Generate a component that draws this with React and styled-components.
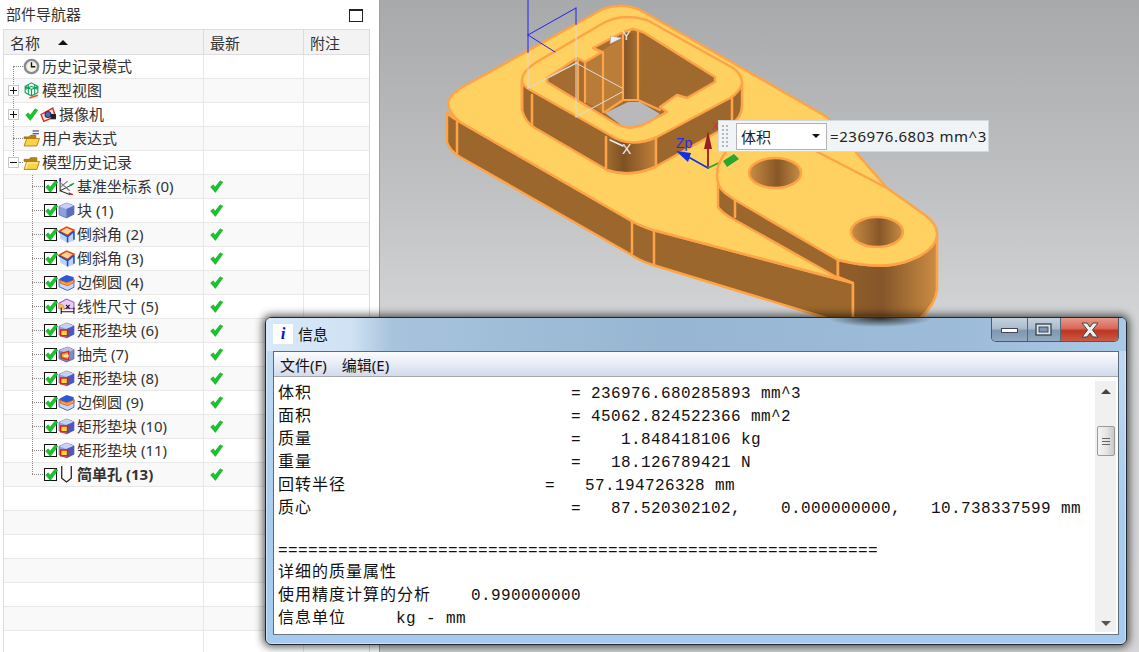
import React from 'react';
import styled, { createGlobalStyle } from 'styled-components';

const CJK = '"Noto Sans", "Noto Sans CJK SC", sans-serif';
const MONO_CJK = '"Liberation Mono", "Noto Sans CJK SC", monospace';

const Global = createGlobalStyle`
  html, body { margin: 0; padding: 0; width: 1139px; height: 652px; overflow: hidden; background: #fff; }
  * { box-sizing: border-box; }
`;

const Page = styled.div`
  position: relative; display: flex; width: 1139px; height: 652px; overflow: hidden;
  font-family: ${CJK}; color: #222;
`;
const Navigator = styled.aside`
  width: 380px; height: 652px; flex: none; display: flex; flex-direction: column;
  background: #fff; border-right: 1px solid #a0a0a0; padding-left: 3px; padding-right: 9px;
`;
const PanelHead = styled.header`
  height: 29px; flex: none; display: flex; align-items: center; justify-content: space-between;
  padding: 0 7px 3px 3px; font-size: 15px; color: #333;
`;
const MaxBox = styled.span`
  width: 14px; height: 13px; border: 1.5px solid #222; border-top-width: 2px; display: block; margin-top: 4px;
`;
const Table = styled.div`
  flex: 1; display: flex; flex-direction: column; overflow: hidden;
  border: solid #dcdcdc; border-width: 1px 1px 0 1px; min-height: 0;
`;
const HeadRow = styled.div`
  height: 25px; flex: none; display: grid; grid-template-columns: 200px 100px 1fr;
  background: #f3f3f3; border-bottom: 1px solid #dedede;
`;
const HeadCell = styled.div`
  display: flex; align-items: center; gap: 18px; padding-left: 6px; font-size: 15px; color: #333;
  border-right: 1px solid #dcdcdc; &:last-child { border-right: 0; }
`;
const SortUp = styled.span`
  width: 0; height: 0; border: 5px solid transparent; border-top: 0; border-bottom: 5px solid #111; margin-top: 1px;
`;
const Row = styled.div`
  position: relative; height: 24px; flex: none; display: grid; grid-template-columns: 200px 100px 1fr;
  background: ${p => (p.$alt ? '#f9f9f9' : '#fff')}; border-bottom: 1px solid #e8e8e8;
`;
const Cell = styled.div`
  display: flex; align-items: center; border-right: 1px solid #e8e8e8; &:last-child { border-right: 0; }
`;
const NameCell = styled(Cell)`
  position: relative; padding-left: ${p => (p.$level ? 40 : 4)}px; font-size: 15px; color: #333; white-space: nowrap;
  font-weight: ${p => (p.$bold ? 700 : 400)};
`;
const StatusCell = styled(Cell)`padding-left: 6px;`;
const VGuide = styled.i`
  position: absolute; left: ${p => p.$x}px; top: ${p => p.$from}px; bottom: ${p => p.$to}px; width: 0;
  border-left: 1px dotted #8a8a8a;
`;
const HGuide = styled.i`
  position: absolute; left: ${p => p.$x}px; top: 11px; width: ${p => p.$w}px; height: 0;
  border-top: 1px dotted #8a8a8a;
`;
const Expander = styled.span`
  position: relative; z-index: 1; width: 11px; height: 11px; flex: none; border: 1px solid #c8c8c8; background: #fff;
  &::before { content: ''; position: absolute; left: 1px; right: 1px; top: 4px; height: 1px; background: #111; }
  &::after { content: ${p => (p.$open ? 'none' : "''")}; position: absolute; top: 1px; bottom: 1px; left: 4px; width: 1px; background: #111; }
`;
const Slot = styled.span`width: 11px; flex: none;`;
const Spacer = styled.span`width: ${p => p.$w}px; flex: none;`;
const CheckBox = styled.span`
  position: relative; width: 13px; height: 13px; flex: none; border: 1.5px solid #111; background: #fff; margin-right: 1px;
  & > svg { position: absolute; left: 0; top: -1px; }
`;
const IconSlot = styled.span`
  position: relative; z-index: 1; width: 16px; flex: none; display: flex; justify-content: center; margin-top: -1px;
`;
const Label = styled.span`margin: -2px 0 0 3px;`;

const Viewport = styled.main`
  flex: 1; height: 652px; background: linear-gradient(#a8a9ab 0, #c0c1c3 190px, #d3d4d6 320px, #d6d6d8 100%);
`;
const Scene = styled.svg`display: block; width: 759px; height: 652px;`;

const Measure = styled.div`
  position: absolute; left: 718px; top: 120px; width: 271px; height: 32px; display: flex; align-items: center;
  background: #f0f4f6; border: 1px solid #d4d8da; font-size: 15px; color: #222;
`;
const Gripper = styled.span`
  width: 8px; height: 24px; margin-left: 2px; flex: none; opacity: .8;
  background-image: radial-gradient(#a9a9a9 1px, transparent 1.2px); background-size: 4px 4px;
`;
const MeasureSelect = styled.div`
  width: 91px; height: 27px; margin-left: 7px; flex: none; display: flex; align-items: center; justify-content: space-between;
  padding: 0 6px 0 4px; background: #fff; border: 1px solid #b4b4b4;
`;
const Caret = styled.span`
  width: 0; height: 0; border: 4px solid transparent; border-bottom: 0; border-top: 4px solid #111;
`;
const MeasureValue = styled.span`margin-left: 3px; white-space: nowrap; letter-spacing: .55px;`;

const Win = styled.section`
  position: absolute; left: 265px; top: 317px; width: 862px; height: 328px; display: flex; flex-direction: column;
  padding: 0 7px 9px 7px; border: 1px solid #23272b; border-radius: 6px;
  background: linear-gradient(#c5dcf2, #a9ccee 60%, #a6cbee);
  box-shadow: 0 0 9px 2px rgba(0,0,0,.65), inset 0 0 0 1px rgba(255,255,255,.45);
`;
const TitleBar = styled.div`
  height: 33px; flex: none; display: flex; align-items: flex-start; margin: 0 -7px; padding: 0 7px;
  border-radius: 5px 5px 0 0;
  background:
    radial-gradient(ellipse 52px 9px at 614px 0, rgba(30,22,14,.85), rgba(30,22,14,0)),
    linear-gradient(90deg, #d8e9f9 0, #cfe2f4 85px, #a8c3dc 125px, #96b6d3 400px, #9dbcd9 700px, #a9c9e6 100%);
`;
const TitleIcon = styled.span`
  width: 20px; height: 20px; flex: none; margin-top: 6px; background: #fff; display: flex; align-items: center; justify-content: center;
  font: italic 700 17px "Liberation Serif", serif; color: #1414c8;
`;
const TitleText = styled.span`margin: 6px 0 0 5px; font-size: 15px; line-height: 20px; color: #111;`;
const Controls = styled.div`
  margin-left: auto; margin-right: 0; display: flex; height: 24px;
  border: 1px solid #4a5868; border-top: 0; border-radius: 0 0 5px 5px; overflow: hidden;
`;
const Ctl = styled.span`
  width: ${p => p.$w}px; height: 100%; display: flex; align-items: center; justify-content: center;
  background: ${p => (p.$close
    ? 'linear-gradient(#e49a8a 0, #d9685a 45%, #bd3520 55%, #cc5a44 100%)'
    : 'linear-gradient(#c4d2df 0, #abbccd 45%, #7f98af 55%, #93aac0 100%)')};
  & + & { border-left: 1px solid #56677a; }
`;
const Client = styled.div`
  flex: 1; min-height: 0; display: flex; flex-direction: column; border: 1px solid #5c6b7a; border-bottom-color: #6b7682; background: #fff;
`;
const MenuBar = styled.nav`
  height: 24px; flex: none; display: flex; align-items: center; gap: 15px; padding-left: 6px; font-size: 15px; color: #111;
  background: linear-gradient(#fbfcfe, #e9edf7 45%, #d3daec);
`;
const MenuRule = styled.div`height: 3px; flex: none; background: #fff; border-top: 1px solid #a9a9a9;`;
const Body = styled.div`flex: 1; min-height: 0; display: flex; padding-right: 2px; background: #fff;`;
const Output = styled.div`flex: 1; min-width: 0; padding: 3px 0 0 4px; overflow: hidden;`;
const Line = styled.div`
  display: flex; height: ${p => p.$h || 23}px; line-height: ${p => p.$h || 23}px; font-size: 16px; color: #111;
  white-space: pre;
`;
const Cjk = styled.span`
  width: ${p => (p.$w ? `${p.$w}px` : 'auto')}; flex: none; margin-top: -2px;
  font-family: "Noto Sans CJK SC", sans-serif; font-size: 16px; letter-spacing: 1px;
`;
const Mono = styled.span`
  margin-top: 1px; font-family: ${MONO_CJK}; letter-spacing: .4px; font-size: 16px;
`;
const Scrollbar = styled.div`
  width: 21px; flex: none; display: flex; flex-direction: column; align-items: center; background: #f0f0f0;
  margin-top: 2px; margin-bottom: 2px; padding: 8px 0 6px;
`;
const ArrowUp = styled.span`
  width: 0; height: 0; border: 5px solid transparent; border-top: 0; border-bottom: 5px solid #444;
`;
const ArrowDown = styled.span`
  width: 0; height: 0; border: 5px solid transparent; border-bottom: 0; border-top: 5px solid #555; margin-top: auto;
`;
const Thumb = styled.div`
  width: 18px; height: 30px; margin-top: 32px; border: 1px solid #9a9a9a; border-radius: 2px;
  background: linear-gradient(90deg, #f4f4f4, #e6e6e6 50%, #c9c9c9); display: flex; flex-direction: column; align-items: center; justify-content: center; gap: 2px;
  & > i { width: 8px; height: 1px; background: #666; display: block; }
`;

const Svg16 = ({ children }) => <svg width={17} height={17} viewBox="0 0 16 16" style={{ flex: 'none', display: 'block' }}>{children}</svg>;

const Tick = ({ s = 13 }) => (
  <svg width={s} height={s} viewBox="0 0 13 13" style={{ display: 'block', flex: 'none' }}>
    <path d="M.6 7 L3.3 4.8 L5 7.3 L10.2 .8 L12.8 2.2 L5.4 12.4 Z" fill="#17c62a" stroke="#0e9c1e" strokeWidth=".5" />
  </svg>
);

const icons = {
  clock: (
    <Svg16><circle cx="8" cy="8" r="7.4" fill="#858c96" /><circle cx="8" cy="8" r="5.1" fill="#f6f1e2" /><path d="M8 4V8.2H11.6" stroke="#111" strokeWidth="1.3" fill="none" /></Svg16>
  ),
  view: (
    <Svg16><path d="M8 .8 14 4V10L8 13 2 10V4Z M2 4 8 7 14 4 M8 7V13 M2 7 8 4 14 7 M5 2.5V11.5 M11 2.5V11.5" fill="#eefaf3" stroke="#12a060" strokeWidth="1" /><path d="M6 15 14 12.5" stroke="#e8502a" strokeWidth="1.6" /></Svg16>
  ),
  camera: (
    <Svg16><path d="M1 8 12 2 14.5 10 3.5 14.5Z" fill="#fbe5dc" stroke="#dd2a12" strokeWidth="1.3" /><circle cx="7.5" cy="8" r="2.8" fill="#5a64a8" stroke="#23308a" /><rect x="10" y="7.5" width="5" height="5" fill="#222" /></Svg16>
  ),
  folder: (
    <Svg16><path d="M1 5H6L7 3.5H13V7H1Z" fill="#b78410" stroke="#8a6208" strokeWidth=".7" /><path d="M1 14.5 3.5 7H15.5L13 14.5Z" fill="#fbd24a" stroke="#a87808" strokeWidth=".8" /><path d="M2.5 14 4.2 8.5H14" stroke="#fff3b8" fill="none" /></Svg16>
  ),
  folderExp: (
    <Svg16><path d="M1 6.5H6L7 5H12V8H1Z" fill="#b78410" stroke="#8a6208" strokeWidth=".7" /><path d="M1 15 3.5 8H15.5L13 15Z" fill="#fbd24a" stroke="#a87808" strokeWidth=".8" /><path d="M9 1H15M9 3.5H15" stroke="#26268c" strokeWidth="1" /></Svg16>
  ),
  csys: (
    <Svg16><path d="M2 2V12L14 6M2 12 12 16" fill="none" stroke="#333" strokeWidth="1" /><path d="M2 9 9 3M3 5 11 12" fill="none" stroke="#777" strokeWidth="1" /><path d="M2 0V3" stroke="#1a1ad0" strokeWidth="1.4" /><path d="M11 7 15 5" stroke="#1aa83a" strokeWidth="1.4" /><path d="M10 14 14 16" stroke="#d8231c" strokeWidth="1.4" /></Svg16>
  ),
  block: (
    <Svg16><path d="M1 4 8 1 15 3.5V11.5L8 15 1 12Z" fill="#8f9fe0" stroke="#6670b4" strokeWidth=".8" /><path d="M1 4 8 6.5 15 3.5 8 1Z" fill="#c9d0f6" /><path d="M8 6.5 15 3.5V11.5L8 15Z" fill="#5c6cc2" /></Svg16>
  ),
  chamfer: (
    <Svg16><path d="M2 6 9 10 15 6V14L9 15.5 2 12Z" fill="#bcd4f8" /><path d="M1 5 8 1 15 4 9 9Z" fill="#fbd68e" stroke="#e2481a" strokeWidth="1.5" /><path d="M1 5.5 9 10V15.5M9 10 15 5M15 5V13" fill="none" stroke="#1e50cc" strokeWidth="1.5" /></Svg16>
  ),
  blend: (
    <Svg16><path d="M1 5V12L9 15.5 15 12.5V5Z" fill="#c9d6f8" stroke="#4a64c4" strokeWidth=".9" /><path d="M2 4 8 1 15 3 14 6 8 8 2 6Z" fill="#2c5ad4" /><path d="M2 6 9 8.5 15 5.5V8L9 11 2 8.5Z" fill="#f6ad4a" stroke="#d8561c" strokeWidth=".8" /></Svg16>
  ),
  dim: (
    <Svg16><path d="M1 5 8 1 15 4V10H1Z" fill="#e6cdf2" stroke="#a05cc0" strokeWidth="1" /><path d="M1 10V5L5 7 6 11" fill="#f7c550" stroke="#d89028" strokeWidth=".7" /><path d="M7.5 6.5 11 10M11 6.5 7.5 10" stroke="#111" strokeWidth="1" /><path d="M3 9V15M15 9V15M3 13H15" stroke="#111" strokeWidth="1" /></Svg16>
  ),
  pad: (
    <Svg16><path d="M1 4 8 1 15 3.5V11.5L8 15 1 12Z" fill="#8f9fe0" stroke="#6670b4" strokeWidth=".8" /><path d="M1 4 8 6.5 15 3.5 8 1Z" fill="#c9d0f6" /><path d="M8 6.5 15 3.5V11.5L8 15Z" fill="#4a5ab8" /><rect x="2.5" y="7.5" width="6.5" height="5.5" fill="#f8d33a" stroke="#dc1f12" strokeWidth="1.4" /></Svg16>
  ),
  shell: (
    <Svg16><path d="M1 4 9 1 15 3.5V12L8 15 1 12Z" fill="#7d8ac4" stroke="#5862a8" strokeWidth=".8" /><path d="M9 1 15 3.5 8 6.5 1 4Z" fill="#b6c0ea" /><path d="M3 7 10 5V13L3 11Z" fill="#f4a23c" stroke="#c8301a" strokeWidth="1.2" /><path d="M5 8.5 10 8V10.5L5 10Z" fill="#fbe3a6" /></Svg16>
  ),
  hole: (
    <Svg16><path d="M3.5 0V11.5L8 15 12.5 11.5V0" fill="#fff" stroke="#222" strokeWidth="1.2" /></Svg16>
  ),
};

const TREE = [
  { label: '历史记录模式', icon: 'clock' },
  { label: '模型视图', icon: 'view', exp: 'plus' },
  { label: '摄像机', icon: 'camera', exp: 'plus', tick: true },
  { label: '用户表达式', icon: 'folderExp' },
  { label: '模型历史记录', icon: 'folder', exp: 'minus' },
  { label: '基准坐标系 (0)', icon: 'csys', feature: true },
  { label: '块 (1)', icon: 'block', feature: true },
  { label: '倒斜角 (2)', icon: 'chamfer', feature: true },
  { label: '倒斜角 (3)', icon: 'chamfer', feature: true },
  { label: '边倒圆 (4)', icon: 'blend', feature: true },
  { label: '线性尺寸 (5)', icon: 'dim', feature: true },
  { label: '矩形垫块 (6)', icon: 'pad', feature: true },
  { label: '抽壳 (7)', icon: 'shell', feature: true },
  { label: '矩形垫块 (8)', icon: 'pad', feature: true },
  { label: '边倒圆 (9)', icon: 'blend', feature: true },
  { label: '矩形垫块 (10)', icon: 'pad', feature: true },
  { label: '矩形垫块 (11)', icon: 'pad', feature: true },
  { label: '简单孔 (13)', icon: 'hole', feature: true, bold: true },
  {}, {}, {}, {}, {}, {}, {}, {},
];

function TreeRow({ item, i }) {
  const isTop = !item.feature && item.label;
  return (
    <Row $alt={i % 2 === 1}>
      <NameCell $level={item.feature ? 1 : 0} $bold={item.bold}>
        {isTop && <VGuide $x={9} $from={i === 0 ? 11 : 0} $to={i === 4 ? 12 : 0} />}
        {isTop && !item.exp && <HGuide $x={9} $w={10} />}
        {item.feature && <VGuide $x={28} $from={0} $to={i === 17 ? 12 : 0} />}
        {item.feature && <HGuide $x={28} $w={11} />}
        {i === 4 && <HGuide $x={15} $w={4} />}
        {isTop && (item.exp ? <Expander $open={item.exp === 'minus'} /> : <Slot />)}
        {isTop && <Spacer $w={item.tick ? 6 : 4} />}
        {item.tick && <><Tick s={13} /><Spacer $w={2} /></>}
        {item.feature && <CheckBox><Tick s={13} /></CheckBox>}
        {item.label && <IconSlot>{icons[item.icon]}</IconSlot>}
        {item.label && <Label>{item.label}</Label>}
      </NameCell>
      <StatusCell>{item.feature && <Tick s={13} />}</StatusCell>
      <Cell />
    </Row>
  );
}

const LINES = [
  { t: '体积', w: 293, v: '= 236976.680285893 mm^3' },
  { t: '面积', w: 293, v: '= 45062.824522366 mm^2' },
  { t: '质量', w: 293, v: '=    1.848418106 kg' },
  { t: '重量', w: 293, v: '=   18.126789421 N' },
  { t: '回转半径', w: 267, v: '=   57.194726328 mm' },
  { t: '质心', w: 293, v: '=   87.520302102,    0.000000000,   10.738337599 mm' },
  { h: 20 },
  { v: '='.repeat(60), h: 21 },
  { t: '详细的质量属性' },
  { t: '使用精度计算的分析', w: 193, v: '0.990000000' },
  { t: '信息单位', w: 118, v: 'kg - mm' },
];

const O = '#ffa347';
const SIDE = '#9b672c';

function Part() {
  return (
    <Scene viewBox="380 0 759 652">
      <defs>
        <linearGradient id="hole" x1="0" x2="1" y1="0" y2="0">
          <stop offset="0" stopColor="#c98d45" /><stop offset=".55" stopColor="#875727" /><stop offset="1" stopColor="#c98d45" />
        </linearGradient>
        <linearGradient id="corner" x1="0" x2="1" y1="0" y2="0">
          <stop offset="0" stopColor="#a06c30" /><stop offset=".35" stopColor="#7e5224" /><stop offset="1" stopColor="#bf8038" />
        </linearGradient>
        <linearGradient id="end" gradientUnits="userSpaceOnUse" x1="853" x2="937" y1="0" y2="0">
          <stop offset="0" stopColor="#8e5d29" /><stop offset=".35" stopColor="#85562a" /><stop offset="1" stopColor="#cb8d43" />
        </linearGradient>
        <linearGradient id="col" x1="0" x2="1" y1="0" y2="0">
          <stop offset="0" stopColor="#7f5325" /><stop offset="1" stopColor="#a86f32" />
        </linearGradient>
      </defs>
      <g strokeLinejoin="round" strokeLinecap="round">
        <path d="M447 113 L447 142 Q449 150 460 157 L630 254 Q640 261 653 265 L833 320 L853 320 L853 283 L653 230 Q640 226 630 220 L460 122 Q450 116 447 113 Z" fill={SIDE} stroke={O} strokeWidth="2.5" />
        <path d="M457 122V153 M632 222V253 M654 231V265" stroke={O} strokeWidth="2.5" fill="none" />
        <path d="M448 103 Q448 112 460 122 L630 220 Q640 226 653 230 L853 283 L838 277 L887 188 L860 157 L827 117 L740 67 L640 10 Q622 2 603 9 L470 83 Q450 93 448 103 Z" fill="#ffd160" stroke={O} strokeWidth="2.5" />
        <path d="M522 80 L522 110 Q525 122 535 128 L607 170 Q630 178 655 167 L730 125 Q742 118 742 105 L742 82 Z" fill={SIDE} stroke={O} strokeWidth="2.5" />
        <path d="M606 135 L606 170 Q630 178 656 166 L656 135 Z" fill="url(#corner)" />
        <path d="M532 95V125 M606 137V168 M656 135V165 M732 95V122 M522 80V110" stroke={O} strokeWidth="2.5" fill="none" />
        <path d="M607 170 Q630 178 655 167" stroke={O} strokeWidth="2.5" fill="none" />
        <path d="M547 78 L577 58 L585 62 L602 52 L593 48 L623 32 L633 29 L643 32 L715 77 L715 82 L687 98 L677 95 L660 107 L667 112 L643 125 L630 128 L618 125 L547 82 Z" fill="#a46c30" />
        <path d="M643 33 L715 79 L660 108 L640 100 Z" fill="#a06a2f" />
        <path d="M623 33 H638 V100 H623 Z" fill="url(#col)" />
        <path d="M603 50 L623 38 V100 L603 112 Z" fill="#bb7e39" />
        <path d="M585 62 L603 52 V112 L585 102 Z" fill="#b87c38" />
        <path d="M605 113 L628 102 H640 L660 114 L640 128 H625 Z" fill="#b9b9bb" />
        <path d="M585 62V102 M603 52V112 M623 34V100 M638 31V100 M623 100H638 M605 112L623 100 M638 100L660 110 M578 60V100" stroke={O} strokeWidth="2.2" fill="none" />
        <path fillRule="evenodd" d="M522 80 Q522 72 535 63 L600 25 Q620 12 647 20 L733 68 Q742 74 742 83 Q740 92 730 98 L657 137 Q630 149 610 135 L532 91 Q522 86 522 80 Z M547 78 L577 58 L585 62 L602 52 L593 48 L623 32 L633 29 L643 32 L715 77 L715 82 L687 98 L677 95 L660 107 L667 112 L643 125 L630 128 L618 125 L547 82 Z" fill="#ffd160" stroke={O} strokeWidth="2.5" />
        <path d="M528 0V53 M528 35L576 8 M528 35L555 52 M576 8V25" stroke="#2222ee" strokeWidth="1" fill="none" />
        <path d="M528 53V88 M576 25V117 M576 63L622 88 M622 92L576 117 M550 77L577 63 M528 88L576 63" stroke="#dcdcdc" strokeWidth="1" fill="none" />
        <path d="M610 140L623 146" stroke="#eee" strokeWidth="1.5" />
        <path d="M610 44L622 38L611 36Z" fill="#eee" stroke="#999" strokeWidth=".5" />
        <path d="M708 168L683 154" stroke="#1230e6" strokeWidth="1.6" />
        <path d="M676 151L691 153L688 162Z" fill="#1230e6" />
        <path d="M708 168V145" stroke="#9a1c24" strokeWidth="1.8" />
        <path d="M708 131L712 149H704Z" fill="#9a1c24" />
        <path d="M708 168L725 160" stroke="#27a02a" strokeWidth="1.6" />
        <path d="M718 182 L718 207 Q722 213 733 219 L838 278 L838 258 L735 198 Z" fill={SIDE} stroke={O} strokeWidth="2.5" />
        <path d="M735 200V217 M838 260V277" stroke={O} strokeWidth="2.5" />
        <path d="M838 260 Q880 270 905 262 Q935 252 937 235 L937 290 Q935 305 920 318 L853 318 L853 283 L838 277 Z" fill="url(#end)" stroke={O} strokeWidth="2.5" />
        <path d="M717 175 C717 150 750 122 785 135 L887 188 L925 215 Q938 225 937 235 Q935 252 905 262 Q880 270 838 260 L735 200 L725 193 Q717 187 717 175 Z" fill="#ffd160" stroke={O} strokeWidth="2.5" />
        <ellipse cx="775" cy="173" rx="26" ry="15" fill="url(#hole)" stroke={O} strokeWidth="2.5" />
        <ellipse cx="877" cy="232" rx="26" ry="15" fill="url(#hole)" stroke={O} strokeWidth="2.5" />
        <path d="M723 161L734 154L739 159L727 167Z" fill="#2aa52e" />
      </g>
      <text x="622" y="40" fontSize="13" fill="#eee" fontFamily="Liberation Sans, sans-serif">Y</text>
      <text x="622" y="154" fontSize="14" fill="#eee" fontFamily="Liberation Sans, sans-serif">X</text>
      <text x="676" y="148" fontSize="14" fill="#2a2ae6" fontFamily="Liberation Sans, sans-serif">Zp</text>
      <text x="712" y="130" fontSize="11" fill="#c83232" fontFamily="Liberation Sans, sans-serif">X</text>
    </Scene>
  );
}

export default function App() {
  return (
    <Page>
      <Global />
      <Navigator>
        <PanelHead>部件导航器<MaxBox /></PanelHead>
        <Table>
          <HeadRow>
            <HeadCell>名称<SortUp /></HeadCell>
            <HeadCell>最新</HeadCell>
            <HeadCell>附注</HeadCell>
          </HeadRow>
          {TREE.map((item, i) => <TreeRow key={i} item={item} i={i} />)}
        </Table>
      </Navigator>
      <Viewport><Part /></Viewport>
      <Measure>
        <Gripper />
        <MeasureSelect>体积<Caret /></MeasureSelect>
        <MeasureValue>=236976.6803 mm^3</MeasureValue>
      </Measure>
      <Win>
        <TitleBar>
          <TitleIcon>i</TitleIcon>
          <TitleText>信息</TitleText>
          <Controls>
            <Ctl $w={35}>
              <svg width="18" height="8" viewBox="0 0 18 8"><rect x=".5" y="2.5" width="16" height="4" fill="#fff" stroke="#445" /></svg>
            </Ctl>
            <Ctl $w={33}>
              <svg width="18" height="14" viewBox="0 0 18 14"><rect x="1" y="1" width="15" height="11" fill="#dfe6ee" stroke="#3f4a58" strokeWidth="1.4" /><rect x="4" y="4" width="9" height="5" fill="#7f97b1" stroke="#3f4a58" /></svg>
            </Ctl>
            <Ctl $w={58} $close>
              <svg width="18" height="16" viewBox="0 0 18 16"><path d="M1 1H6L9 5 12 1H17L11.5 8 17 15H12L9 11 6 15H1L6.5 8Z" fill="#eee" stroke="#444" strokeWidth="1" /></svg>
            </Ctl>
          </Controls>
        </TitleBar>
        <Client>
          <MenuBar><span>文件(F)</span><span>编辑(E)</span></MenuBar>
          <MenuRule />
          <Body>
            <Output>
              {LINES.map((l, i) => (
                <Line key={i} $h={l.h}>
                  {l.t && <Cjk $w={l.w}>{l.t}</Cjk>}
                  {l.v && <Mono>{l.v}</Mono>}
                </Line>
              ))}
            </Output>
            <Scrollbar>
              <ArrowUp />
              <Thumb><i /><i /><i /></Thumb>
              <ArrowDown />
            </Scrollbar>
          </Body>
        </Client>
      </Win>
    </Page>
  );
}
